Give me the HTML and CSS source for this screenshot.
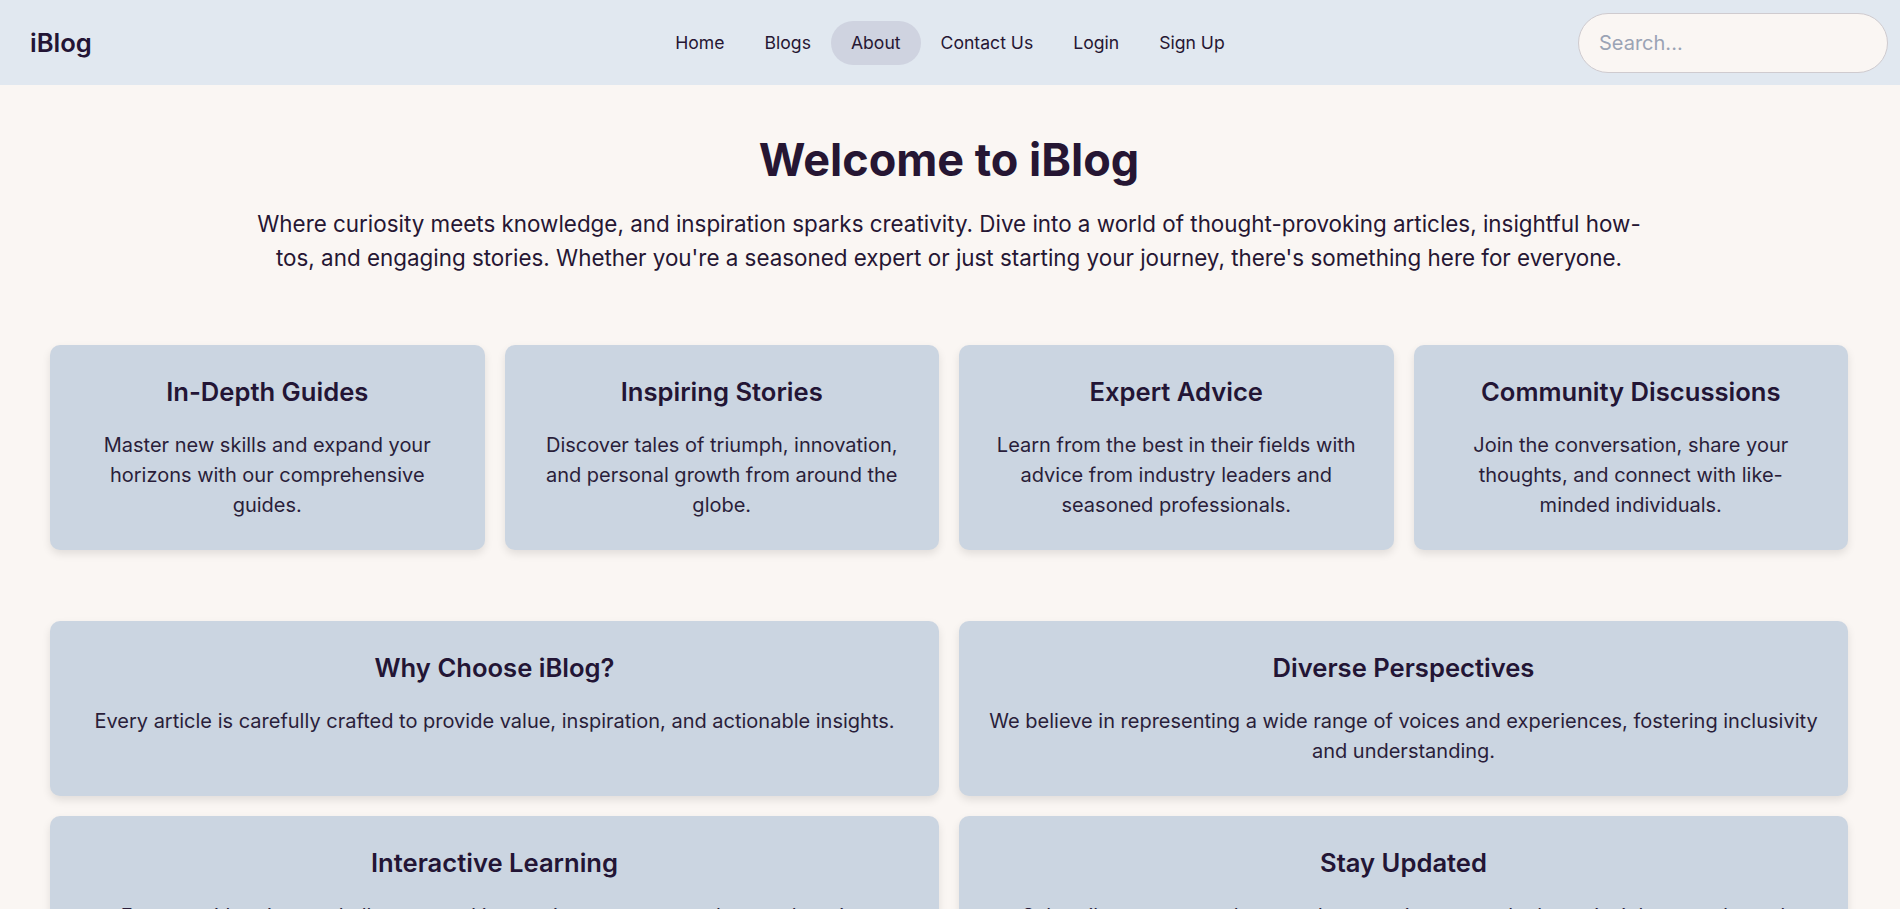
FILE: index.html
```html
<!DOCTYPE html>
<html lang="en">
<head>
<meta charset="UTF-8">
<title>iBlog - About</title>
<link rel="stylesheet" href="styles.css">
</head>
<body>
<header class="navbar">
  <div class="logo">iBlog</div>
  <nav class="nav-links">
    <a href="#" class="nav-link">Home</a>
    <a href="#" class="nav-link">Blogs</a>
    <a href="#" class="nav-link active">About</a>
    <a href="#" class="nav-link">Contact Us</a>
    <a href="#" class="nav-link">Login</a>
    <a href="#" class="nav-link">Sign Up</a>
  </nav>
  <div class="search-wrap">
    <input class="search" type="text" placeholder="Search...">
  </div>
</header>
<main class="content">
  <section class="hero">
    <h1 class="hero-title">Welcome to iBlog</h1>
    <p class="hero-text">Where curiosity meets knowledge, and inspiration sparks creativity. Dive into a world of thought-provoking articles, insightful how-tos, and engaging stories. Whether you're a seasoned expert or just starting your journey, there's something here for everyone.</p>
  </section>
  <section class="grid grid-4">
    <div class="card">
      <h3 class="card-title">In-Depth Guides</h3>
      <p class="card-text">Master new skills and expand your horizons with our comprehensive guides.</p>
    </div>
    <div class="card">
      <h3 class="card-title">Inspiring Stories</h3>
      <p class="card-text">Discover tales of triumph, innovation, and personal growth from around the globe.</p>
    </div>
    <div class="card">
      <h3 class="card-title">Expert Advice</h3>
      <p class="card-text">Learn from the best in their fields with advice from industry leaders and seasoned professionals.</p>
    </div>
    <div class="card">
      <h3 class="card-title">Community Discussions</h3>
      <p class="card-text">Join the conversation, share your thoughts, and connect with like-minded individuals.</p>
    </div>
  </section>
  <section class="grid grid-2">
    <div class="card">
      <h3 class="card-title">Why Choose iBlog?</h3>
      <p class="card-text">Every article is carefully crafted to provide value, inspiration, and actionable insights.</p>
    </div>
    <div class="card">
      <h3 class="card-title">Diverse Perspectives</h3>
      <p class="card-text">We believe in representing a wide range of voices and experiences, fostering inclusivity and understanding.</p>
    </div>
    <div class="card">
      <h3 class="card-title">Interactive Learning</h3>
      <p class="card-text">Engage with quizzes, challenges, and interactive content to make your learning experience fun and memorable.</p>
    </div>
    <div class="card">
      <h3 class="card-title">Stay Updated</h3>
      <p class="card-text">Subscribe to our newsletter and never miss out on the latest insights, trends, and updates from iBlog.</p>
    </div>
  </section>
</main>
</body>
</html>
```
FILE: styles.css
```css
* { box-sizing: border-box; }
html, body { margin: 0; padding: 0; }
body {
  font-family: Inter, "Noto Sans", sans-serif;
  background: #faf6f3;
  color: #261633;
}
.navbar {
  height: 85px;
  background: #e1e8f0;
  display: grid;
  grid-template-columns: 1fr auto 1fr;
  align-items: center;
  padding: 0 12px;
}
.logo {
  padding-left: 18px;
  font-size: 25.6px;
  font-weight: 600;
  color: #231535;
}
.nav-links {
  display: flex;
  align-items: center;
}
.nav-link {
  text-decoration: none;
  color: #261633;
  font-size: 17.6px;
  line-height: 24px;
  padding: 10px 20px;
  border-radius: 22px;
}
.nav-link.active { background: #cfd3e0; }
.search-wrap { display: flex; justify-content: flex-end; }
.search {
  width: 310px;
  height: 60px;
  border: 1px solid #cfcbcf;
  border-radius: 30px;
  background: #faf6f3;
  padding: 0 20px;
  font-family: Inter, sans-serif;
  font-size: 20px;
  color: #261633;
  outline: none;
}
.search::placeholder { color: #9aa3b5; }
.content { padding: 0 52px 0 50px; }
.hero { text-align: center; padding-top: 41px; }
.hero-title {
  margin: 0;
  font-size: 45px;
  font-weight: 700;
  line-height: 68px;
  color: #261633;
}
.hero-text {
  max-width: 1400px;
  margin: 13px auto 0;
  font-size: 22.4px;
  line-height: 33.6px;
}
.grid { display: grid; gap: 20px; }
.grid-4 { grid-template-columns: repeat(4, 1fr); margin-top: 71px; }
.grid-2 { grid-template-columns: repeat(2, 1fr); margin-top: 71px; }
.card {
  background: #cbd5e1;
  border-radius: 10px;
  padding: 32px 32px 30px;
  text-align: center;
  box-shadow: 0 4px 8px rgba(0, 0, 0, 0.1);
}
.grid-2 .card { padding-left: 28px; padding-right: 28px; }
.card-title {
  margin: 0 0 23px;
  font-size: 25.6px;
  font-weight: 600;
  line-height: 30px;
  color: #231535;
}
.card-text {
  margin: 0;
  font-size: 20px;
  line-height: 30px;
  color: #2a1e3a;
}
```
